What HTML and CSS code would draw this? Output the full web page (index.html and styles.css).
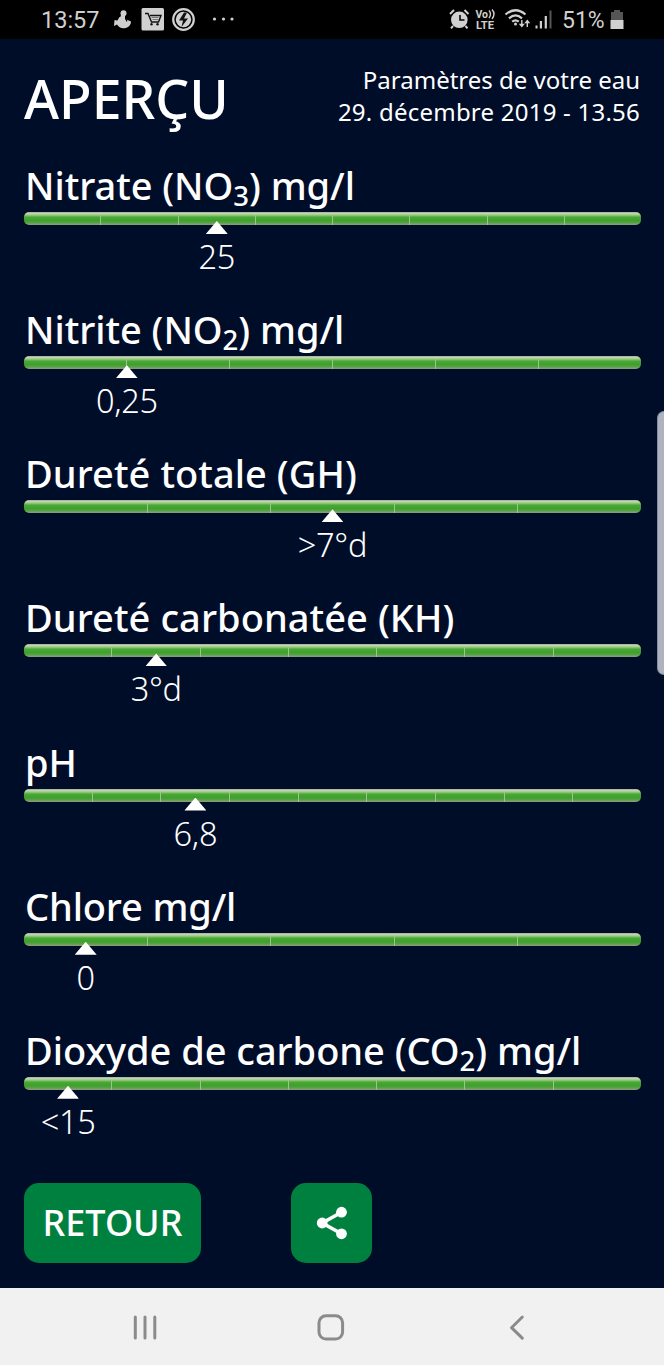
FILE: index.html
```html
<!DOCTYPE html>
<html lang="fr">
<head>
<meta charset="utf-8">
<title>Aperçu</title>
<link rel="stylesheet" href="styles.css">
</head>
<body>
<div class="status">
  <span class="clock">13:57</span>
  <svg class="notices" width="130" height="38" viewBox="108 0 130 38">
    <g fill="#d0d0d0">
      <circle cx="123.500" cy="13.300" r="3"/>
      <path d="M121 15l4 0 0 4 2 4-5 0-3-2z"/>
      <path d="M119.500 17l3 0 3 3 1 3-8 1-2-2z"/>
      <path d="M114.500 20l4.500 1 4-2.500 3 3.500 1.500-1-1-1.500 4.500 2c0 4-3.500 6.800-7.500 6.800-3 0-5-1.500-6.500-3.700l-3 1.500z"/>
      <rect x="141.500" y="8" width="22.500" height="22.500" rx="1.500"/>
      <circle cx="214.500" cy="19" r="1.600"/><circle cx="223.500" cy="19" r="1.600"/><circle cx="232" cy="19" r="1.600"/>
    </g>
    <path d="M145 13.500h3l3.500 8.500h7l2.500-6.500h-11" fill="none" stroke="#111" stroke-width="1.400"/>
    <path d="M151.500 17.500h7M152.500 19.500h6" stroke="#777" stroke-width="1"/>
    <circle cx="151.500" cy="24.300" r="1.200" fill="#111"/><circle cx="157.500" cy="24.300" r="1.200" fill="#111"/>
    <circle cx="183.500" cy="19.500" r="10.300" fill="none" stroke="#d0d0d0" stroke-width="2.200"/>
    <circle cx="183.500" cy="19.500" r="7.700" fill="#d0d0d0"/>
    <path d="M184 12.500l-5 8h4l-1.500 6.500 6.500-8.500h-4l3-6z" fill="#111"/>
  </svg>
  <svg class="system" width="112" height="38" viewBox="445 0 112 38">
    <g fill="none" stroke="#d0d0d0" stroke-width="2">
      <path d="M450 14l4-4M464.500 10l4 4M453 26l-2 2.300M465.500 26l2 2.300"/>
    </g>
    <circle cx="459.300" cy="19.800" r="8.300" fill="#d0d0d0"/>
    <path d="M460 15v5h4.500" fill="none" stroke="#050505" stroke-width="1.600"/>
    <text class="volte" x="475.500" y="18" textLength="12.500" lengthAdjust="spacingAndGlyphs">Vo</text>
    <text class="volte" x="476" y="28.800" textLength="18" lengthAdjust="spacingAndGlyphs">LTE</text>
    <path d="M489 10.500q3 3.500 0 7.500M492 9.500q4 4.500 0 9.500" fill="none" stroke="#d0d0d0" stroke-width="1.400"/>
    <g fill="none" stroke="#d0d0d0" stroke-width="2.200">
      <path d="M505.500 14.500q10-8.500 20 0M509 18.300q6.500-5.700 13 0M512.200 21.600q3.300-2.600 6.600 0"/>
      <path d="M521.800 20v5.500M527.300 27v-5" stroke-width="1.400"/>
    </g>
    <g fill="#d0d0d0">
      <circle cx="515.500" cy="24" r="1.500"/>
      <path d="M518.800 23.800h6l-3 3.700zM524.300 23.200h6l-3-3.700z"/>
      <rect x="535.500" y="25.500" width="2" height="3"/><rect x="539.800" y="21" width="2.200" height="7.500"/><rect x="544.700" y="16" width="2.200" height="12.500"/>
      <rect x="549.500" y="10.500" width="2" height="18" fill="#555"/>
    </g>
  </svg>
  <span class="percent">51%</span>
  <svg class="battery" width="14" height="38" viewBox="610 0 14 38">
    <path d="M614 10h6v2h3v9h-12v-9h3z" fill="#555"/>
    <path d="M610.500 20h13v9h-13z" fill="#d0d0d0"/>
  </svg>
</div>
<main class="app">
  <header class="top">
    <h1 class="title">APERÇU</h1>
    <p class="info"><span class="info-name">Paramètres de votre eau</span><br><span class="info-date">29. décembre 2019 - 13.56</span></p>
  </header>
  <section class="item"><h2 class="name nitrate">Nitrate (NO<small>3</small>) mg/l</h2>
    <div class="bar"><i></i><i></i><i></i><i></i><i></i><i></i><i></i><i></i></div>
    <div class="pointer" style="margin-left:31.25%"><b class="arrow"></b><span>25</span></div></section>
  <section class="item"><h2 class="name nitrite">Nitrite (NO<small>2</small>) mg/l</h2>
    <div class="bar"><i></i><i></i><i></i><i></i><i></i><i></i></div>
    <div class="pointer" style="margin-left:16.67%"><b class="arrow"></b><span>0,25</span></div></section>
  <section class="item"><h2 class="name gh">Dureté totale (GH)</h2>
    <div class="bar"><i></i><i></i><i></i><i></i><i></i></div>
    <div class="pointer" style="margin-left:50%"><b class="arrow"></b><span>&gt;7°d</span></div></section>
  <section class="item"><h2 class="name kh">Dureté carbonatée (KH)</h2>
    <div class="bar"><i></i><i></i><i></i><i></i><i></i><i></i><i></i></div>
    <div class="pointer" style="margin-left:21.43%"><b class="arrow"></b><span>3°d</span></div></section>
  <section class="item"><h2 class="name ph">pH</h2>
    <div class="bar"><i></i><i></i><i></i><i></i><i></i><i></i><i></i><i></i><i></i></div>
    <div class="pointer" style="margin-left:27.78%"><b class="arrow"></b><span>6,8</span></div></section>
  <section class="item"><h2 class="name chlore">Chlore mg/l</h2>
    <div class="bar"><i></i><i></i><i></i><i></i><i></i></div>
    <div class="pointer" style="margin-left:10%"><b class="arrow"></b><span>0</span></div></section>
  <section class="item"><h2 class="name co2">Dioxyde de carbone (CO<small>2</small>) mg/l</h2>
    <div class="bar"><i></i><i></i><i></i><i></i><i></i><i></i><i></i></div>
    <div class="pointer" style="margin-left:7.14%"><b class="arrow"></b><span>&lt;15</span></div></section>
  <div class="actions">
    <button class="btn back">RETOUR</button>
    <button class="btn share" aria-label="Partager"><svg width="32" height="34" viewBox="0 0 32 34"><path d="M25.500 6.200L6.200 17l19.300 10.800" fill="none" stroke="#fff" stroke-width="3.600"/><g fill="#fff"><circle cx="25.500" cy="6.200" r="5.400"/><circle cx="6.200" cy="17" r="5.400"/><circle cx="25.500" cy="27.800" r="5.400"/></g></svg></button>
  </div>
  <div class="edge"></div>
</main>
<nav class="nav">
  <svg width="664" height="77" viewBox="0 1288 664 77" fill="none" stroke="#8b8b8b" stroke-width="3" stroke-linecap="round" stroke-linejoin="round">
    <path d="M135.300 1317v21M145 1317v21M154.800 1317v21"/>
    <rect x="319" y="1315.800" width="23.600" height="23.200" rx="7"/>
    <path d="M522.300 1317l-10.800 10.700 10.800 10.500"/>
  </svg>
</nav>
</body>
</html>
```
FILE: styles.css
```css
* { box-sizing: border-box; }
body { margin: 0; width: 664px; height: 1365px; overflow: hidden; background: #000d29; color: #fff; font-family: "Noto Sans", "Open Sans", sans-serif; }
svg { display: block; flex: none; }
.status { display: flex; height: 39px; background: #000; color: #d0d0d0; font-family: Roboto, sans-serif; font-size: 23.500px; line-height: 41px; }
.clock { width: 67px; margin-left: 41px; white-space: nowrap; }
.system { margin-left: 207px; }
.volte { font: 700 11px Roboto, sans-serif; fill: #d0d0d0; }
.percent { width: 48px; margin-left: 5px; font-size: 23px; white-space: nowrap; }
.app { position: relative; height: 1249px; padding: 0 23px 0 24px; }
.top { display: flex; justify-content: space-between; height: 129px; }
.title { margin: 23px 0 0; font-size: 53.500px; line-height: 74px; font-weight: 550; }
.info { margin: 25px 1px 0 0; font-size: 24px; line-height: 32px; text-align: right; white-space: nowrap; }
.info-date { letter-spacing: 0.230px; }
.item { height: 144.150px; }
.name { margin: 0 0 0 1px; height: 44px; font-size: 38px; font-weight: 500; line-height: 34px; letter-spacing: -0.040px; white-space: nowrap; }
.name small { font-size: 27.500px; line-height: 0; position: relative; top: 6px; }
.gh, .kh { letter-spacing: 0.060px; }
.chlore { letter-spacing: -0.150px; }
.bar { display: flex; height: 13px; border-radius: 5px; overflow: hidden; background: linear-gradient(#a5ad9b 0, #c3d3b2 12%, #9dce86 22%, #49a835 40%, #3ca12e 66%, #55a141 80%, #929b83 100%); }
.bar i { flex: 1; margin-top: 3px; border-left: 1px solid #9dc38f; }
.bar i:first-child { border-left: 0; }
.pointer { position: relative; display: flex; flex-direction: column; align-items: center; width: fit-content; margin-top: -4px; transform: translateX(-50%); font-size: 32.500px; font-weight: 300; line-height: 45px; letter-spacing: -0.300px; white-space: nowrap; }
.arrow { width: 22px; height: 13px; background: #fff; clip-path: polygon(50% 0, 100% 100%, 0 100%); }
.actions { display: flex; gap: 90px; margin-top: 6px; }
.btn { display: flex; align-items: center; justify-content: center; height: 80px; padding: 0; border: 0; border-radius: 15px; background: #00803f; color: #fff; font: 500 36px "Noto Sans", "Open Sans", sans-serif; }
.back { width: 177px; }
.share { width: 81px; }
.edge { position: absolute; right: 0; top: 372px; width: 7px; height: 264px; border-radius: 7px 0 0 7px; background: #aeb3c1; border: 1px solid #878c9b; border-right: 0; }
.nav { height: 77px; background: #f1f1f1; }
```
